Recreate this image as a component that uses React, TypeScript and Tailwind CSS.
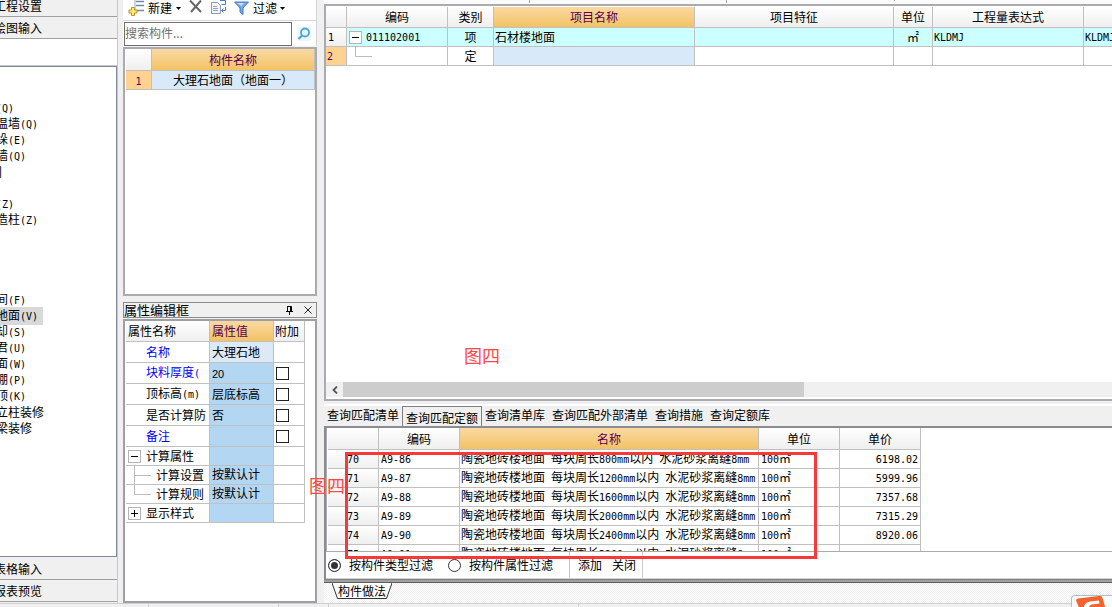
import React from "react";

/* Latin runs take a 6px-wide face so that they sit on the half-width grid. */
function T({ children }: { children: string }) {
  return (
    <>
      {children.split(/([\x20-\x7e]+)/).map((part, i) =>
        i % 2 ? (
          <span key={i} className="whitespace-pre font-['DejaVu_Sans_Mono',monospace] text-[10px]">
            {part}
          </span>
        ) : (
          part
        )
      )}
    </>
  );
}

const GREY = "bg-linear-to-b from-white to-[#efefef]";
const GOLD = "bg-linear-to-b from-[#f9d9a2] to-[#f3c262] text-[#550055]";
const CELL = "border-r border-b border-[#c0c0c0] p-0 font-normal whitespace-nowrap overflow-hidden";

const TREE: string[] = [
  "", "", "(Q)", "温墙(Q)", "垛(E)", "墙(Q)", "", "", "(Z)", "造柱(Z)", "", "", "", "",
  "间(F)", "地面(V)", "却(S)", "君(U)", "面(W)", "棚(P)", "顶(K)", "立柱装修", "梁装修",
];

function LeftPane() {
  return (
    <aside className="flex w-[118px] shrink-0 flex-col overflow-hidden border-r border-[#c8c8c8] bg-[#f0f0f0]">
      <button className="flex h-[17px] items-start border-b border-[#a0a0a0] text-left leading-3">
        <span className="-ml-1.5">工程设置</span>
      </button>
      <button className="flex h-[22px] items-center border-b border-[#a0a0a0] text-left">
        <span className="-ml-1.5">绘图输入</span>
      </button>
      <div className="h-[27px] border-b border-[#c8c8c8] bg-white" />
      <ul className="min-h-0 flex-1 overflow-hidden border-t border-r border-b border-[#83879a] bg-white pt-px">
        {TREE.map((t, i) => (
          <li key={i} className="flex h-4 items-center">
            {i === 6 ? (
              <span className="-ml-2.5">门</span>
            ) : (
              <span className={`-ml-1 leading-4 ${i === 15 ? "bg-[#d9d9d9] pr-[5px]" : ""}`}>
                <T>{t}</T>
              </span>
            )}
          </li>
        ))}
      </ul>
      <button className="mt-px flex h-[22px] shrink-0 items-center border-b border-[#a0a0a0] text-left">
        <span className="-ml-1.5">表格输入</span>
      </button>
      <button className="mb-px flex h-[22px] shrink-0 items-center border-b border-[#a0a0a0] text-left">
        <span className="-ml-1.5">报表预览</span>
      </button>
    </aside>
  );
}

function Caret() {
  return (
    <svg width="5" height="3" viewBox="0 0 5 3" aria-hidden="true">
      <path d="M0 0h5L2.500 3z" fill="#000" />
    </svg>
  );
}

function Toolbar() {
  return (
    <div className="flex h-[21px] shrink-0 items-start border-b border-[#d4d4d4] pl-[5px] leading-4">
      <button className="flex items-center">
        <svg width="16" height="16" viewBox="0 0 16 16" aria-hidden="true">
          <path d="M8 1.500h8M8 5.500h8M8 10.500h8" stroke="#7088a8" strokeWidth="1.500" />
          <path d="M7 0v11" stroke="#9aa8bd" />
          <path d="M3.500 7.500h3v2.500h2.500v3h-2.500v2.500h-3V13H1v-3h2.500z" fill="#ffe873" stroke="#b8942e" />
        </svg>
        <span className="mx-1">新建</span>
        <Caret />
      </button>
      <button aria-label="删除" className="ml-2">
        <svg width="14" height="14" viewBox="0 0 14 14" aria-hidden="true">
          <path d="M1 0.500L12 12M12 0.500L2 12" stroke="#666" strokeWidth="2" />
        </svg>
      </button>
      <button aria-label="复制" className="ml-[7px]">
        <svg width="17" height="15" viewBox="0 0 17 15" aria-hidden="true">
          <path d="M1.500 2.500h6l3 3v8h-9z" fill="#f3f6fb" stroke="#8d9bb5" />
          <path d="M3 6.500h4M3 8.500h5M3 10.500h5" stroke="#8ea2c8" />
          <path d="M10 0.500h5.500v4h-4M15.500 7v3.500h-4M13.500 8.500L11.500 10.500l2 2" fill="none" stroke="#4f78c2" />
        </svg>
      </button>
      <button className="ml-[7px] flex items-center">
        <svg width="15" height="14" viewBox="0 0 15 14" aria-hidden="true">
          <path d="M0.500 1h14L9 7v6.500L6 11V7z" fill="#76a9ea" stroke="#4379c9" />
          <path d="M3 2h7L7.500 5z" fill="#c6defa" />
        </svg>
        <span className="ml-1 mr-[3px]">过滤</span>
        <Caret />
      </button>
    </div>
  );
}

function Box({ plus }: { plus?: boolean }) {
  return (
    <svg width="13" height="13" viewBox="0 0 13 13" className="shrink-0" aria-hidden="true">
      <rect x="0.500" y="0.500" width="12" height="12" fill="#fff" stroke="#b4b4b4" />
      <path d={plus ? "M3 6.500h7M6.500 3v7" : "M3 6.500h7"} stroke="#000" />
    </svg>
  );
}

type Prop = { name: string; value: string; tall?: boolean; blue?: boolean; check?: boolean; kind?: "open" | "shut" | "mid" | "last" };

const PROPS: Prop[] = [
  { name: "名称", value: "大理石地", tall: true, blue: true },
  { name: "块料厚度(", value: "20", tall: true, blue: true, check: true },
  { name: "顶标高(m)", value: "层底标高", tall: true, check: true },
  { name: "是否计算防", value: "否", tall: true, check: true },
  { name: "备注", value: "", tall: true, blue: true, check: true },
  { name: "计算属性", value: "", kind: "open" },
  { name: "计算设置", value: "按默认计", kind: "mid" },
  { name: "计算规则", value: "按默认计", kind: "last" },
  { name: "显示样式", value: "", kind: "shut" },
];

function PropName({ p }: { p: Prop }) {
  if (p.kind === "open" || p.kind === "shut")
    return (
      <span className="flex h-[18px] items-center gap-[5px] pl-[2px]">
        <Box plus={p.kind === "shut"} />
        {p.name}
      </span>
    );
  if (p.kind)
    return (
      <span className="flex h-[18px] items-center gap-[5px] pl-2">
        <svg width="17" height="18" viewBox="0 0 17 18" className="shrink-0" aria-hidden="true">
          <path d={p.kind === "mid" ? "M0.500 0v18M0 9.500h17" : "M0.500 0v9.500h17"} fill="none" stroke="#bcbcbc" />
        </svg>
        {p.name}
      </span>
    );
  return (
    <span className={`block pl-5 ${p.blue ? "text-[#0000ff]" : ""}`}>
      <T>{p.name}</T>
    </span>
  );
}

function MiddlePane() {
  return (
    <section className="flex w-[199px] shrink-0 flex-col bg-[#f0f0f0] pl-[5px]">
      <div className="flex shrink-0 flex-col border-r border-[#d4d4d4] bg-white">
        <Toolbar />
        <div className="flex h-[25px] items-center">
          <input
            aria-label="搜索构件"
            placeholder="搜索构件..."
            className="mt-px ml-px h-6 w-[168px] border border-[#707070] bg-white pb-1 text-xs outline-none placeholder:text-[#707070]"
          />
          <button aria-label="搜索" className="ml-[5px]">
            <svg width="14" height="14" viewBox="0 0 14 14" aria-hidden="true">
              <rect width="14" height="14" fill="#eef6fc" />
              <circle cx="8" cy="5.500" r="4" fill="#e8f5fd" stroke="#4aa5dc" strokeWidth="1.800" />
              <path d="M5 8.500L1.500 12" stroke="#4aa5dc" strokeWidth="2.200" />
            </svg>
          </button>
        </div>
      </div>

      <div className="mt-px h-[249px] shrink-0 border-2 border-[#ababaf] bg-white pl-px">
        <table className="w-full table-fixed border-separate border-spacing-0 text-center">
          <thead>
            <tr className="h-[22px]">
              <th className={`${CELL} ${GREY} w-[26px]`} />
              <th className={`${CELL} ${GOLD}`}>构件名称</th>
            </tr>
          </thead>
          <tbody>
            <tr className="h-[19px]">
              <td className={`${CELL} bg-[#ffd38f] text-[#550055]`}><T>1</T></td>
              <td className={`${CELL} bg-[#d8eaf9]`}>大理石地面（地面一）</td>
            </tr>
          </tbody>
        </table>
      </div>

      <div className="mt-[6px] flex h-4 shrink-0 items-center border border-[#8c8c8c] text-[13px] leading-[14px]">
        <h2 className="flex-1">属性编辑框</h2>
        <button aria-label="固定" className="mr-[11px]">
          <svg width="7" height="9" viewBox="0 0 7 9" aria-hidden="true">
            <path d="M1.500 0.500h4v5M1.500 0v5.500M4.500 0v5.500M0 5.500h7M3.500 5.500V9" fill="none" stroke="#000" />
          </svg>
        </button>
        <button aria-label="关闭面板" className="mr-[4px]">
          <svg width="8" height="8" viewBox="0 0 8 8" aria-hidden="true">
            <path d="M0.500 0.500l7 7M7.500 0.500l-7 7" stroke="#222" />
          </svg>
        </button>
      </div>

      <div className="mt-px min-h-0 flex-1 border-2 border-[#a0a0a4] bg-white pl-px">
        <table className="w-[179px] table-fixed border-separate border-spacing-0 text-left leading-4">
          <thead>
            <tr className="h-[21px]">
              <th className={`${CELL} ${GREY} w-[84px] pl-[2px]`}>属性名称</th>
              <th className={`${CELL} ${GOLD} w-16 pl-[2px]`}>属性值</th>
              <th className={`${CELL} ${GREY} w-[31px] pl-px`}>附加</th>
            </tr>
          </thead>
          <tbody>
            {PROPS.map((p, i) => (
              <tr key={i} className={p.tall ? "h-[21px]" : "h-[19px]"}>
                <td className={CELL}><PropName p={p} /></td>
                <td className={`${CELL} pl-[2px] ${p.tall ? "" : "align-top"} ${i === 0 ? "bg-[#dbe9f9]" : "bg-[#b3d6f3]"}`}>
                  {p.value === "20" ? <span className="font-['Liberation_Sans',sans-serif] text-[11px]">20</span> : p.value}
                </td>
                <td className={CELL}>
                  {p.check && (
                    <input
                      type="checkbox"
                      aria-label={`附加 ${p.name}`}
                      className="ml-[2px] block size-[13px] appearance-none border border-[#222] bg-white checked:bg-[#222]"
                    />
                  )}
                </td>
              </tr>
            ))}
          </tbody>
        </table>
      </div>
    </section>
  );
}

function ItemGrid() {
  return (
    <div className="relative flex min-h-0 flex-1 flex-col overflow-hidden border-t-2 border-b-2 border-l-2 border-[#ababaf] bg-white pt-px">
      <table className="w-[900px] table-fixed border-separate border-spacing-0 text-center leading-4">
        <thead>
          <tr className="h-[21px]">
            <th className={`${CELL} ${GREY} w-[21px]`} />
            <th className={`${CELL} ${GREY} w-[101px]`}>编码</th>
            <th className={`${CELL} ${GREY} w-[46px]`}>类别</th>
            <th className={`${CELL} ${GOLD} w-[201px]`}>项目名称</th>
            <th className={`${CELL} ${GREY} w-[199px]`}>项目特征</th>
            <th className={`${CELL} ${GREY} w-[39px]`}>单位</th>
            <th className={`${CELL} ${GREY} w-[151px]`}>工程量表达式</th>
            <th className={`${CELL} ${GREY}`} />
          </tr>
        </thead>
        <tbody>
          <tr className="h-[19px] bg-[#ccffff]">
            <td className={`${CELL} ${GREY} pl-[2px] text-left`}><T>1</T></td>
            <td className={CELL}>
              <span className="flex h-[18px] items-center gap-1 pl-[2px]">
                <Box />
                <span><T>011102001</T></span>
              </span>
            </td>
            <td className={CELL}>项</td>
            <td className={`${CELL} pl-px text-left`}>石材楼地面</td>
            <td className={CELL} />
            <td className={CELL}>㎡</td>
            <td className={`${CELL} pl-px text-left`}><T>KLDMJ</T></td>
            <td className={`${CELL} pl-px text-left`}><T>KLDMJ</T></td>
          </tr>
          <tr className="h-[19px]">
            <td className={`${CELL} bg-[#ffd38f] pl-px text-left text-[#550055]`}><T>2</T></td>
            <td className={CELL}>
              <svg width="17" height="18" viewBox="0 0 17 18" className="ml-2 block" aria-hidden="true">
                <path d="M0.500 0v9.500h16.500" fill="none" stroke="#bcbcbc" />
              </svg>
            </td>
            <td className={CELL}>定</td>
            <td className={`${CELL} bg-[#d8eaf9]`} />
            <td className={CELL} />
            <td className={CELL} />
            <td className={CELL} />
            <td className={CELL} />
          </tr>
        </tbody>
      </table>
      <span className="absolute top-[337px] left-[138px] text-lg leading-6 text-[#ff4848]">图四</span>
      <div className="mt-auto mb-[2px] flex h-[15px] bg-[#f0f0f0]">
        <button aria-label="向左滚动" className="flex w-[17px] items-center justify-center">
          <svg width="6" height="8" viewBox="0 0 6 8" aria-hidden="true">
            <path d="M5 0.500L1.500 4L5 7.500" fill="none" stroke="#555" strokeWidth="1.800" />
          </svg>
        </button>
        <div className="w-[461px] bg-[#cdcdcd]" />
      </div>
    </div>
  );
}

const TABS = ["查询匹配清单", "查询匹配定额", "查询清单库", "查询匹配外部清单", "查询措施", "查询定额库"];

const QUOTAS = [
  [70, "A9-86", "800", "6198.02"],
  [71, "A9-87", "1200", "5999.96"],
  [72, "A9-88", "1600", "7357.68"],
  [73, "A9-89", "2000", "7315.29"],
  [74, "A9-90", "2400", "8920.06"],
  [75, "A9-91", "3200", ""],
] as const;

function QuotaPane() {
  return (
    <div className="relative shrink-0">
      <div role="tablist" className="mt-[3px] flex h-[22px] items-start gap-[7px] border-t-2 border-white pl-[3px] leading-4">
        {TABS.map((t, i) => (
          <button
            key={t}
            role="tab"
            aria-selected={i === 1}
            className={i === 1 ? "-mx-1 h-5 border border-b-0 border-[#808080] px-[3px] pt-[3px]" : "pt-px"}
          >
            {t}
          </button>
        ))}
      </div>
      <div className="border-t-2 border-l-2 border-[#8c8c90] bg-white">
        <div className="h-[124px] overflow-hidden border-b border-l border-[#ababaf] pl-px">
          <table className="w-[593px] table-fixed border-separate border-spacing-0 leading-4">
            <thead>
              <tr className="h-[22px] text-center">
                <th className={`${CELL} ${GREY} w-[51px]`} />
                <th className={`${CELL} ${GREY} w-[81px]`}>编码</th>
                <th className={`${CELL} ${GOLD} w-[299px]`}>名称</th>
                <th className={`${CELL} ${GREY} w-[81px]`}>单位</th>
                <th className={`${CELL} ${GREY} w-[81px]`}>单价</th>
              </tr>
            </thead>
            <tbody>
              {QUOTAS.map(([n, code, len, price]) => (
                <tr key={n} className="h-[19px]">
                  <td className={`${CELL} ${GREY} text-center`}><T>{String(n)}</T></td>
                  <td className={`${CELL} pl-[2px]`}><T>{code}</T></td>
                  <td className={`${CELL} pl-px`}><T>{`陶瓷地砖楼地面 每块周长${len}mm以内 水泥砂浆离缝8mm`}</T></td>
                  <td className={`${CELL} pl-[2px]`}><T>100㎡</T></td>
                  <td className={`${CELL} pr-[2px] text-right`}><T>{price}</T></td>
                </tr>
              ))}
            </tbody>
          </table>
        </div>
        <div className="flex h-[27px] items-stretch border-b border-[#d4d4d4] pl-[2px] leading-4">
          <label className="flex items-center gap-2">
            <input type="radio" name="filter" defaultChecked className="size-[13px] appearance-none rounded-full border border-[#333] bg-white checked:bg-[#333] checked:shadow-[inset_0_0_0_2px_#fff]" />
            按构件类型过滤
          </label>
          <label className="ml-[15px] flex items-center gap-2">
            <input type="radio" name="filter" className="size-[13px] appearance-none rounded-full border border-[#333] bg-white checked:bg-[#333] checked:shadow-[inset_0_0_0_2px_#fff]" />
            按构件属性过滤
          </label>
          <div className="ml-4 flex items-center gap-[10px] border-x border-[#c8c8c8] pr-[6px] pl-2">
            <button>添加</button>
            <button>关闭</button>
          </div>
        </div>
      </div>
      <div className="h-1 border-t border-b border-t-[#808080] border-b-[#606060] bg-[#a0a0a0]" />
      <div className="flex h-5 items-start bg-[repeating-conic-gradient(#f0f0f0_0_25%,#ffffff_0_50%)] bg-[length:2px_2px] pl-2">
        <svg width="6" height="16" viewBox="0 0 6 16" aria-hidden="true">
          <path d="M0 0h6v16z" fill="#fff" />
          <path d="M0 0l5.500 15.500H6" fill="none" stroke="#333" />
        </svg>
        <button className="h-4 border-b border-[#333] bg-white leading-[15px]">构件做法</button>
        <svg width="6" height="16" viewBox="0 0 6 16" aria-hidden="true">
          <path d="M0 0h6L0 16z" fill="#fff" />
          <path d="M6 0L0.500 15.500H0" fill="none" stroke="#333" />
        </svg>
      </div>
      <div className="pointer-events-none absolute top-[51px] left-[21px] h-[107px] w-[472px] border-3 border-[#fb3838]" />
      <span className="absolute top-[72px] -left-[15px] text-lg leading-6 text-[#ff4848]">图四</span>
    </div>
  );
}

export default function App() {
  return (
    <main className="relative flex h-screen flex-col overflow-hidden bg-[#f0f0f0] font-['Noto_Sans_CJK_SC',sans-serif] text-xs text-black">
      <div className="flex min-h-0 flex-1">
        <LeftPane />
        <MiddlePane />
        <section className="flex min-w-0 flex-1 flex-col pl-[7px]">
          <div className="flex h-1 shrink-0 bg-[#fafafa]">
            <i className="ml-[205px] h-[3px] w-px bg-[#a0a0a0]" />
            <i className="ml-[196px] h-[3px] w-px bg-[#a0a0a0]" />
            <i className="ml-[167px] h-px w-px bg-[#a0a0a0]" />
          </div>
          <ItemGrid />
          <QuotaPane />
        </section>
      </div>
      <footer className="flex h-1 shrink-0 border-t border-[#d0d0d0]">
        <i className="ml-[148px] w-px bg-[#d0d0d0]" />
        <i className="ml-[129px] w-px bg-[#d0d0d0]" />
        <i className="ml-[49px] w-px bg-[#d0d0d0]" />
        <i className="ml-[249px] w-px bg-[#d0d0d0]" />
      </footer>
      <div className="absolute right-0 bottom-0 h-3 w-[41px] overflow-hidden rounded-tl-sm border-t border-l border-[#b0bccb] bg-[#f8fafc]">
        <svg width="40" height="12" viewBox="0 0 40 12" aria-hidden="true">
          <path d="M4 4.500Q4 3 6 2.500L27 0q3-.4 3.500 2L34 14H8z" fill="#f4622d" />
          <path d="M12 14q-1-7 6-8.500l9-1 .5 3-8 1q-3 .5-2.500 5.500z" fill="#fff" />
        </svg>
      </div>
    </main>
  );
}
